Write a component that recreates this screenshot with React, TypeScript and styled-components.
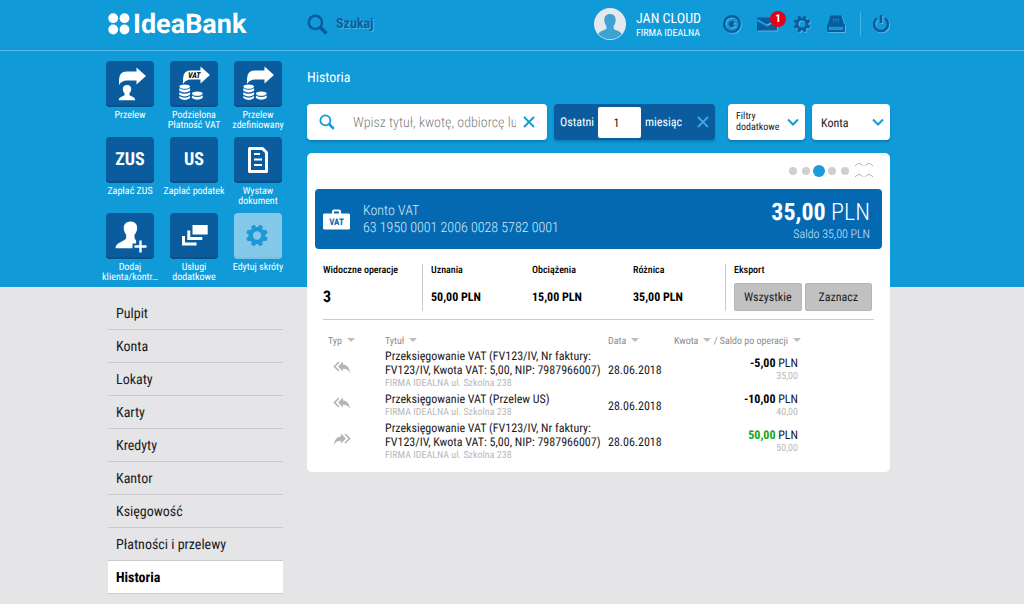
import React from "react";
import styled, { createGlobalStyle, css } from "styled-components";

const color = {
  sky: "#109ad8",
  navy: "#0b5c9e",
  banner: "#0569b2",
  canvas: "#e5e5e7",
  line: "#cbcbcd",
  muted: "#b9b9b9",
  label: "#8c8c8c",
  ink: "#1a1a22",
  red: "#e2001a",
  green: "#12a512",
};

const GlobalStyle = createGlobalStyle`
  *, *::before, *::after { box-sizing: border-box; }
  body {
    margin: 0;
    color: ${color.ink};
    font-family: "Roboto Condensed", Roboto, "Liberation Sans", sans-serif;
    font-size: 12px;
    line-height: 14px;
    text-rendering: geometricPrecision;
    background: ${color.canvas} linear-gradient(${color.sky}, ${color.sky}) 0 0 / 100% 287px no-repeat;
  }
  button, input, select { font: inherit; color: inherit; text-rendering: inherit; border: 0; margin: 0; padding: 0; background: none; }
  button { cursor: pointer; }
  a { color: inherit; text-decoration: none; }
  svg { display: block; flex: none; }
`;

const columns = css`
  display: grid;
  grid-template-columns: 192px minmax(0, 1fr);
  column-gap: 17px;
  padding: 0 134px 0 98px;
`;

/* ---------- header ---------- */

const Header = styled.header`
  ${columns}
  align-items: center;
  height: 51px;
  padding-bottom: 2px;
  border-bottom: 1px solid #58bdea;
`;

const Logo = styled.a`
  display: flex;
  align-items: center;
  gap: 3px;
  padding-left: 10px;
  color: #fff;
  font: 700 27px/30px Roboto, "Liberation Sans", sans-serif;
`;

const LogoWord = styled.span`
  display: flex;
  align-items: flex-end;
`;

const HeaderBar = styled.div`
  display: flex;
  align-items: center;
  justify-content: space-between;
  color: ${color.navy};
`;

const SearchLink = styled.button`
  display: flex;
  align-items: center;
  gap: 8px;
  font-size: 14px;
  font-weight: 700;
  text-shadow: 1px 1px 0 rgba(255, 255, 255, 0.25);
`;

const Tools = styled.div`
  display: flex;
  align-items: center;
  gap: 14px;
`;

const User = styled.a`
  display: flex;
  align-items: center;
  gap: 10px;
  margin-right: 7px;
  color: #fff;
`;

const UserText = styled.span`
  display: flex;
  flex-direction: column;
  font-size: 10px;
  line-height: 14px;
  padding-top: 3px;
`;

const UserName = styled.strong`
  font-size: 14px;
  font-weight: 400;
  line-height: 16px;
`;

const ToolButton = styled.button`
  display: block;
  position: relative;
  svg { filter: drop-shadow(1px 1px 0 rgba(255, 255, 255, 0.28)); }
`;

const Badge = styled.span`
  position: absolute;
  top: -6px;
  right: -8px;
  width: 16px;
  height: 16px;
  border-radius: 50%;
  background: ${color.red};
  color: #fff;
  font-size: 11px;
  font-weight: 700;
  line-height: 16px;
`;

const PowerGroup = styled.div`
  display: flex;
  padding-left: 11px;
  border-left: 1px solid #4ab2e2;
  height: 24px;
  align-items: center;
`;

/* ---------- sidebar ---------- */

const Page = styled.div`
  ${columns}
  align-items: start;
`;

const Shortcuts = styled.div`
  display: grid;
  grid-template-columns: repeat(3, 1fr);
  grid-auto-rows: 76px;
  padding-top: 10px;
`;

const Shortcut = styled.a`
  display: flex;
  flex-direction: column;
  align-items: center;
  gap: 4px;
  color: #fff;
  font-size: 10px;
  line-height: 10px;
  text-align: center;
  white-space: nowrap;
`;

const Tile = styled.span<{ $light?: boolean }>`
  display: grid;
  place-items: center;
  width: 48px;
  height: 46px;
  border-radius: 4px;
  background: ${(p) => (p.$light ? "#84c8ea" : color.navy)};
  box-shadow: inset 0 -2px 0 ${(p) => (p.$light ? "#7bbfe2" : "#0a5089")};
  font-size: 18px;
  font-weight: 700;
  line-height: 24px;
`;

const Nav = styled.nav`
  display: flex;
  flex-direction: column;
  margin: 8px 7px 0 10px;
`;

const NavLink = styled.a<{ $active?: boolean }>`
  padding: 2px 8px 0;
  border-bottom: 1px solid ${color.line};
  font-size: 14px;
  line-height: 30px;
  ${(p) => p.$active && css`background: #fff; color: #000; font-weight: 700;`}
`;

/* ---------- main ---------- */

const Title = styled.h1`
  margin: 0;
  padding: 17px 0 16px;
  color: #fff;
  font-size: 14px;
  font-weight: 400;
  line-height: 20px;
`;

const Filters = styled.form`
  display: flex;
  gap: 7px;
  height: 36px;
  margin-bottom: 13px;
`;

const fieldBox = css`
  display: flex;
  align-items: center;
  border-radius: 4px;
  background: #fff;
  box-shadow: 0 2px 2px rgba(0, 60, 110, 0.3);
`;

const SearchBox = styled.div`
  ${fieldBox}
  flex: 1;
  min-width: 0;
  padding: 0 12px;
  color: ${color.sky};
`;

const SearchInput = styled.input`
  flex: 1;
  min-width: 0;
  height: 34px;
  margin: 0 7px 0 18px;
  padding-top: 2px;
  font-size: 14px;
  font-weight: 300;
  outline: 0;
  &::placeholder { color: #808080; opacity: 1; }
`;

const Period = styled.div`
  ${fieldBox}
  width: 161px;
  margin-right: 6px;
  padding: 0 6px;
  background: ${color.navy};
  color: #fff;
`;

const PeriodLabel = styled.label`
  flex: none;
  width: 38px;
`;

const PeriodInput = styled.input`
  width: 43px;
  height: 31px;
  margin: 0 4px 0 0;
  border-radius: 2px;
  background: #fff;
  color: ${color.ink};
  text-align: center;
  padding: 2px 6px 0 0;
`;

const ClearPeriod = styled.button`
  margin-left: auto;
  color: #3fa9dc;
`;

const FilterButton = styled.button`
  ${fieldBox}
  justify-content: space-between;
  width: 77px;
  padding: 0 6px 0 8px;
  font-size: 10px;
  line-height: 11px;
  text-align: left;
  svg { color: ${color.sky}; }
`;

const AccountField = styled.label`
  ${fieldBox}
  display: grid;
  width: 78px;
  svg {
    grid-area: 1 / 1;
    justify-self: end;
    margin-right: 6px;
    color: ${color.sky};
    pointer-events: none;
  }
`;

const AccountSelect = styled.select`
  grid-area: 1 / 1;
  height: 36px;
  padding: 2px 20px 0 9px;
  appearance: none;
`;

const Card = styled.section`
  padding: 0 8px 9px;
  border-radius: 5px;
  background: #fff;
`;

const Pager = styled.div`
  display: flex;
  align-items: center;
  justify-content: flex-end;
  gap: 5px;
  height: 36px;
  padding-right: 8px;
`;

const Dot = styled.button<{ $on?: boolean }>`
  width: ${(p) => (p.$on ? 12 : 8)}px;
  height: ${(p) => (p.$on ? 12 : 8)}px;
  margin: ${(p) => (p.$on ? "0 -2px" : "0")};
  border-radius: 50%;
  background: ${(p) => (p.$on ? "#1c9bd8" : "#cfcfcf")};
`;

const Banner = styled.div`
  display: flex;
  align-items: center;
  height: 60px;
  padding: 0 12px 0 8px;
  border-radius: 4px;
  background: ${color.banner};
  color: #d3eafa;
  font-weight: 300;
`;

const BannerAccount = styled.div`
  margin-left: 13px;
  padding-top: 2px;
  font-size: 14px;
  line-height: 17px;
`;

const BannerBalance = styled.div`
  margin-left: auto;
  padding-top: 2px;
  line-height: 16px;
  text-align: right;
`;

const Balance = styled.div`
  color: #fff;
  font-size: 24px;
  line-height: 28px;
  b { font-weight: 700; }
`;

const Summary = styled.div`
  display: grid;
  grid-template-columns: 99px minmax(0, 110fr) minmax(0, 101fr) minmax(0, 92fr) 149px;
  align-items: start;
  margin: 0 8px;
  padding: 15px 0 8px;
  border-bottom: 1px solid ${color.line};
`;

const Metric = styled.div<{ $divided?: boolean }>`
  height: 47px;
  padding-left: ${(p) => (p.$divided ? 8 : 0)}px;
  border-left: ${(p) => (p.$divided ? "1px solid #cbcbcd" : "0")};
  color: #000;
`;

const MetricLabel = styled.div`
  font-size: 10px;
  font-weight: 500;
  line-height: 14px;
`;

const MetricValue = styled.div<{ $large?: boolean }>`
  padding-top: 10px;
  font-size: ${(p) => (p.$large ? 16 : 12)}px;
  font-weight: 700;
  line-height: 18px;
`;

const ExportButtons = styled.div`
  display: flex;
  gap: 3px;
  padding: 5px 2px 0 0;
`;

const ExportButton = styled.button`
  flex: 1;
  height: 28px;
  border: 1px solid #b5b5b5;
  border-radius: 2px;
  background: #c1c1c1;
  color: ${color.ink};
`;

const Table = styled.table`
  width: calc(100% - 16px);
  margin: 15px 8px 0;
  border-collapse: collapse;
  table-layout: fixed;
`;

const Th = styled.th<{ $width?: number; $right?: boolean }>`
  width: ${(p) => (p.$width ? `${p.$width}px` : "auto")};
  padding: 0 ${(p) => (p.$right ? 76 : 0)}px 0 0;
  color: ${color.label};
  font-size: 10px;
  font-weight: 400;
  line-height: 13px;
  text-align: ${(p) => (p.$right ? "right" : "left")};
  white-space: nowrap;
  &:first-child { padding-left: 5px; }
`;

const SortArrow = styled.span`
  display: inline-block;
  margin: 0 0 2px 5px;
  border: 4px solid transparent;
  border-top-color: #bdbdbd;
  border-bottom: 0;
`;

const Td = styled.td<{ $right?: boolean }>`
  padding: 1px ${(p) => (p.$right ? 76 : 0)}px 1px 0;
  line-height: 14px;
  text-align: ${(p) => (p.$right ? "right" : "left")};
  vertical-align: middle;
  &:first-child { padding: 0 0 4px 10px; color: #b5b5b5; }
`;

const Minor = styled.div`
  color: ${color.muted};
  font-size: 10px;
  line-height: 13px;
`;

const Amount = styled.b<{ $positive?: boolean }>`
  color: ${(p) => (p.$positive ? color.green : "#000")};
  font-weight: 700;
`;

/* ---------- drawings ---------- */

function gearPath(cx: number, cy: number, outer: number, body: number, hole: number) {
  const points: string[] = [];
  for (let i = 0; i < 8; i++) {
    const a = ((i + 0.5) * Math.PI) / 4;
    [[-0.27, body], [-0.17, outer], [0.17, outer], [0.27, body]].forEach(([d, r]) => {
      points.push(`${(cx + r * Math.cos(a + d)).toFixed(2)} ${(cy + r * Math.sin(a + d)).toFixed(2)}`);
    });
  }
  return `M${points.join("L")}ZM${cx - hole} ${cy}a${hole} ${hole} 0 1 0 ${hole * 2} 0a${hole} ${hole} 0 1 0 ${-hole * 2} 0Z`;
}

const Magnifier = ({ size, weight }: { size: number; weight: number }) => (
  <svg width={size} height={size} viewBox="0 0 20 20" fill="none" stroke="currentColor" strokeWidth={weight} aria-hidden>
    <circle cx="8" cy="8" r="6.3" />
    <path d="M12.5 12.5L18.5 18.5" strokeWidth={weight + 1} />
  </svg>
);

const Cross = () => (
  <svg width="12" height="12" viewBox="0 0 12 12" fill="none" stroke="currentColor" strokeWidth="1.8" aria-hidden>
    <path d="M1 1L11 11M11 1L1 11" />
  </svg>
);

const Chevron = () => (
  <svg width="12" height="8" viewBox="0 0 12 8" fill="none" stroke="currentColor" strokeWidth="2" aria-hidden>
    <path d="M1 1.5L6 6.5L11 1.5" />
  </svg>
);

const TileSvg = ({ children }: { children: React.ReactNode }) => (
  <svg width="48" height="46" viewBox="0 0 48 46" fill="#fff" aria-hidden>{children}</svg>
);

const bigArrow = "M13 24V19Q13 10.5 20.5 10.5H30.5V6.5L40 15L30.5 23.5V19.5H21Q15.5 19.5 13 24Z";

const Coins = () => (
  <g>
    <ellipse cx="14.7" cy="25.6" rx="5.4" ry="2.2" />
    <path d="M9.3 27.2q5.4 3.2 10.8 0v2.6q-5.4 3.6-10.8 0zM9.3 31.2q5.4 3.2 10.8 0v2.6q-5.4 3.6-10.8 0zM9.3 35.1q5.4 3.2 10.8 0v2q-5.4 3.8-10.8 0z" />
    <ellipse cx="27.3" cy="32.6" rx="5.4" ry="2.2" />
    <path d="M21.9 34.4q5.4 3.2 10.8 0v2.6q-5.4 3.6-10.8 0z" />
  </g>
);

const icons: Record<string, React.ReactNode> = {
  transfer: (
    <TileSvg>
      <path d={bigArrow} />
      <path d="M21 24c3 0 4.400 1.900 4.200 4.300c-.1 1.800-.9 3.100-1.800 4.100v1.600c.6 1.300 5.800 1.600 5.800 5.300H12.800c0-3.700 5.200-4 5.800-5.300v-1.600c-.9-1-1.700-2.300-1.800-4.100c-.2-2.400 1.200-4.300 4.200-4.300z" />
    </TileSvg>
  ),
  split: (
    <TileSvg>
      <g transform="translate(0 -1)"><path d={bigArrow} /></g>
      <text x="18" y="16.500" fill="#000" fontSize="8" fontWeight="700" fontStyle="italic">VAT</text>
      <Coins />
    </TileSvg>
  ),
  defined: (
    <TileSvg>
      <g transform="translate(0 -1)"><path d={bigArrow} /></g>
      <Coins />
    </TileSvg>
  ),
  document: (
    <TileSvg>
      <path d="M15.500 11.500H28.500L32.500 15.500V34.500H15.500Z" fill="none" stroke="#fff" strokeWidth="3" strokeLinejoin="round" />
      <path d="M20 17h6M20 22.500h8M20 28h8" stroke="#fff" strokeWidth="2" />
    </TileSvg>
  ),
  client: (
    <TileSvg>
      <path d="M24.500 8.500c4.600 0 7 3 6.600 7.200c-.3 3-1.400 4.600-2.600 6v3.300c.5 1.200 1 1.800 1.600 2.200v3.300h-3.600v4.800H9.500c0-6.500 9.500-6.500 10.700-10.300v-3.300c-1.200-1.400-2.200-3-2.400-6c-.3-4.200 2.200-7.200 6.700-7.200z" />
      <path d="M34.500 27.500v12M28.500 33.500h12" stroke="#fff" strokeWidth="2.400" />
    </TileSvg>
  ),
  services: (
    <TileSvg>
      <path d="M22.500 12h15.200v9.500H22.500z" />
      <path d="M17.300 17.500h3v6.500h12v3h-15zM12 23h3v6.500h11.500v3H12z" />
    </TileSvg>
  ),
  edit: (
    <TileSvg>
      <path d={gearPath(23, 22.5, 11, 8.5, 4.2)} fill="#1c99d5" fillRule="evenodd" />
    </TileSvg>
  ),
};

const Briefcase = () => (
  <svg width="27" height="21" viewBox="0 0 27 21" fill="#fff" aria-hidden>
    <path d="M9 5V2.500Q9 .5 11 .5h5q2 0 2 2V5h-2V2.500h-5V5z" />
    <rect y="4.500" width="27" height="16" rx="1.500" />
    <text x="13.500" y="16" textAnchor="middle" fontSize="9" fontWeight="700" fill={color.banner}>VAT</text>
  </svg>
);

const ReplyAll = ({ flip }: { flip?: boolean }) => (
  <svg width="18" height="13" viewBox="0 0 18 13" aria-label={flip ? "Uznanie" : "Obciążenie"}>
    <g transform={flip ? "translate(18 0) scale(-1 1)" : undefined}>
      <path d="M6 1L1.500 5.500L6 10" fill="none" stroke="currentColor" strokeWidth="1.700" />
      <path d="M10 .5V3.500C14.500 3.800 16.500 7 17 12C15.500 9 13.500 7.700 10 7.700V10.500L5 5.500Z" fill="currentColor" />
    </g>
  </svg>
);

/* ---------- data ---------- */

const shortcuts: { icon?: string; text?: string; label: React.ReactNode }[] = [
  { icon: "transfer", label: "Przelew" },
  { icon: "split", label: <>Podzielona<br />Płatność VAT</> },
  { icon: "defined", label: <>Przelew<br />zdefiniowany</> },
  { text: "ZUS", label: "Zapłać ZUS" },
  { text: "US", label: "Zapłać podatek" },
  { icon: "document", label: <>Wystaw<br />dokument</> },
  { icon: "client", label: <>Dodaj<br />klienta/kontr…</> },
  { icon: "services", label: <>Usługi<br />dodatkowe</> },
  { icon: "edit", label: "Edytuj skróty" },
];

const menu = ["Pulpit", "Konta", "Lokaty", "Karty", "Kredyty", "Kantor", "Księgowość", "Płatności i przelewy", "Historia", "Usługi dodatkowe"];

const longTitle = "Przeksięgowanie VAT (FV123/IV, Nr faktury: FV123/IV, Kwota VAT: 5,00, NIP: 7987966007)";

const operations = [
  { title: longTitle, amount: "-5,00", balance: "35,00" },
  { title: "Przeksięgowanie VAT (Przelew US)", amount: "-10,00", balance: "40,00" },
  { title: longTitle, amount: "50,00", balance: "50,00", incoming: true },
];

export default function App() {
  return (
    <>
      <GlobalStyle />
      <Header>
        <Logo href="#">
          <svg width="22" height="22" viewBox="0 0 22 22" fill="#fff" aria-hidden>
            <circle cx="5.200" cy="5.200" r="4.900" />
            <circle cx="16.500" cy="5.200" r="4.900" />
            <circle cx="5.200" cy="16.500" r="4.900" />
            <circle cx="16.500" cy="16.500" r="4.900" />
          </svg>
          <LogoWord><span>Idea</span><span>Bank</span></LogoWord>
        </Logo>
        <HeaderBar>
          <SearchLink type="button">
            <Magnifier size={21} weight={2.4} />
            Szukaj
          </SearchLink>
          <Tools>
            <User href="#">
              <svg width="32" height="32" viewBox="0 0 32 32" aria-hidden>
                <circle cx="16" cy="16" r="16" fill="#e6e8ec" />
                <path d="M16 6c4.300 0 6 3 5.600 7c-.2 2.400-1 3.600-2 5v2.500c1 2 6.900 1.800 8 5.800a16 16 0 0 1-23.200 0c1.100-4 7-3.800 8-5.800V18c-1-1.400-1.800-2.600-2-5C10 9 11.700 6 16 6z" fill="#3ea3d2" />
              </svg>
              <UserText>
                <UserName>JAN CLOUD</UserName>
                FIRMA IDEALNA
              </UserText>
            </User>
            <ToolButton type="button" aria-label="Cele">
              <svg width="20" height="20" viewBox="0 0 20 20">
                <circle cx="10" cy="10" r="7.800" fill="none" stroke="currentColor" strokeWidth="2.500" />
                <path d="M12.700 8.200a3.300 3.300 0 1 0 .4 2.800l-2.100-.6z" fill="currentColor" />
              </svg>
            </ToolButton>
            <ToolButton type="button" aria-label="Wiadomości">
              <svg width="22" height="14" viewBox="0 0 22 14" fill="currentColor">
                <path d="M1 .5h20v1.500L11 7.500L1 2zM1 4.200l10 5.500l10-5.500v9.300H1z" />
              </svg>
              <Badge>1</Badge>
            </ToolButton>
            <ToolButton type="button" aria-label="Ustawienia">
              <svg width="20" height="20" viewBox="0 0 20 20">
                <path d={gearPath(10, 10, 8.5, 6.4, 3.6)} fill="currentColor" fillRule="evenodd" />
              </svg>
            </ToolButton>
            <ToolButton type="button" aria-label="Sejf">
              <svg width="20" height="20" viewBox="0 0 20 20" fill="currentColor">
                <path d="M4.500 1.500h11L18.500 11.500h-17z" />
                <path d="M1 10.500h18v6q0 1.500-1.500 1.500h-15q-1.500 0-1.500-1.500z" />
                <path d="M2.800 12.800h14.400v3.200H2.800z" fill={color.sky} />
                <path d="M7.500 8.500v-3M10 8.500v-3M12.500 8.500v-3M7 5.300h6" fill="none" stroke={color.sky} strokeWidth=".7" />
              </svg>
            </ToolButton>
            <PowerGroup>
              <ToolButton type="button" aria-label="Wyloguj">
                <svg width="18" height="20" viewBox="0 0 18 20" fill="none" stroke="currentColor" strokeWidth="2.500">
                  <path d="M5 4.600a6.900 6.900 0 1 0 8 0" />
                  <path d="M9 1v8" />
                </svg>
              </ToolButton>
            </PowerGroup>
          </Tools>
        </HeaderBar>
      </Header>

      <Page>
        <aside>
          <Shortcuts>
            {shortcuts.map((s, i) => (
              <Shortcut href="#" key={i}>
                <Tile $light={s.icon === "edit"}>{s.icon ? icons[s.icon] : s.text}</Tile>
                <span>{s.label}</span>
              </Shortcut>
            ))}
          </Shortcuts>
          <Nav>
            {menu.map((item) => (
              <NavLink href="#" key={item} $active={item === "Historia"}>{item}</NavLink>
            ))}
          </Nav>
        </aside>

        <main>
          <Title>Historia</Title>
          <Filters onSubmit={(e) => e.preventDefault()}>
            <SearchBox>
              <Magnifier size={16} weight={2.2} />
              <SearchInput type="text" aria-label="Szukaj operacji" placeholder="Wpisz tytuł, kwotę, odbiorcę lub numer" />
              <button type="button" aria-label="Wyczyść"><Cross /></button>
            </SearchBox>
            <Period>
              <PeriodLabel htmlFor="months">Ostatni</PeriodLabel>
              <PeriodInput id="months" type="text" defaultValue="1" />
              <span>miesiąc</span>
              <ClearPeriod type="button" aria-label="Usuń okres"><Cross /></ClearPeriod>
            </Period>
            <FilterButton type="button">
              <span>Filtry<br />dodatkowe</span>
              <Chevron />
            </FilterButton>
            <AccountField>
              <AccountSelect aria-label="Konta"><option>Konta</option></AccountSelect>
              <Chevron />
            </AccountField>
          </Filters>

          <Card>
            <Pager>
              {[0, 1, 2, 3, 4].map((n) => (
                <Dot type="button" key={n} $on={n === 2} aria-label={`Strona ${n + 1}`} />
              ))}
              <svg width="20" height="18" viewBox="0 0 20 18" fill="none" stroke="#b5b5b5" aria-hidden>
                <path d="M1 4q4-5 8 0M11 4q4-5 8 0M1 15q4-5 8 0M11 15q4-5 8 0" />
              </svg>
            </Pager>
            <Banner>
              <Briefcase />
              <BannerAccount>
                <div>Konto VAT</div>
                <div>63 1950 0001 2006 0028 5782 0001</div>
              </BannerAccount>
              <BannerBalance>
                <Balance><b>35,00</b> PLN</Balance>
                Saldo 35,00 PLN
              </BannerBalance>
            </Banner>
            <Summary>
              <Metric>
                <MetricLabel>Widoczne operacje</MetricLabel>
                <MetricValue $large>3</MetricValue>
              </Metric>
              <Metric $divided>
                <MetricLabel>Uznania</MetricLabel>
                <MetricValue>50,00 PLN</MetricValue>
              </Metric>
              <Metric>
                <MetricLabel>Obciążenia</MetricLabel>
                <MetricValue>15,00 PLN</MetricValue>
              </Metric>
              <Metric>
                <MetricLabel>Różnica</MetricLabel>
                <MetricValue>35,00 PLN</MetricValue>
              </Metric>
              <Metric $divided>
                <MetricLabel>Eksport</MetricLabel>
                <ExportButtons>
                  <ExportButton type="button">Wszystkie</ExportButton>
                  <ExportButton type="button">Zaznacz</ExportButton>
                </ExportButtons>
              </Metric>
            </Summary>
            <Table>
              <thead>
                <tr>
                  <Th $width={62}>Typ<SortArrow /></Th>
                  <Th>Tytuł<SortArrow /></Th>
                  <Th $width={66}>Data<SortArrow /></Th>
                  <Th $width={200} $right>Kwota<SortArrow />&nbsp;/ Saldo po operacji<SortArrow /></Th>
                </tr>
              </thead>
              <tbody>
                {operations.map((op, i) => (
                  <tr key={i}>
                    <Td><ReplyAll flip={op.incoming} /></Td>
                    <Td>
                      {op.title}
                      <Minor>FIRMA IDEALNA ul. Szkolna 238</Minor>
                    </Td>
                    <Td>28.06.2018</Td>
                    <Td $right>
                      <Amount $positive={op.incoming}>{op.amount}</Amount> PLN
                      <Minor>{op.balance}</Minor>
                    </Td>
                  </tr>
                ))}
              </tbody>
            </Table>
          </Card>
        </main>
      </Page>
    </>
  );
}
